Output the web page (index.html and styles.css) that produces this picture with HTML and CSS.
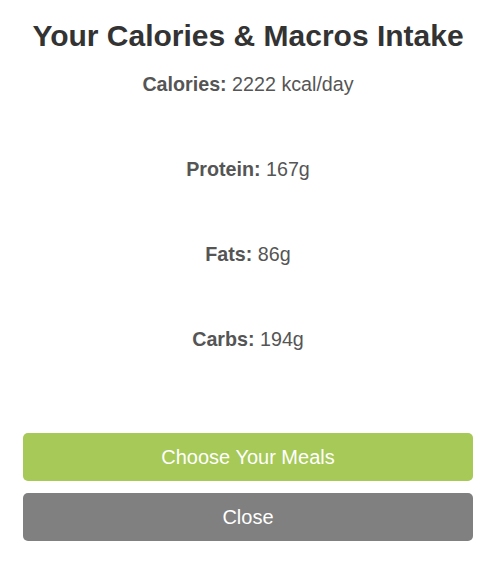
FILE: index.html
```html
<!DOCTYPE html>
<html>
<head>
<meta charset="utf-8">
<link rel="stylesheet" href="styles.css">
</head>
<body>
<div class="modal">
  <h2 class="title">Your Calories &amp; Macros Intake</h2>
  <div class="stats">
    <p class="stat"><strong>Calories:</strong> 2222 kcal/day</p>
    <p class="stat"><strong>Protein:</strong> 167g</p>
    <p class="stat"><strong>Fats:</strong> 86g</p>
    <p class="stat"><strong>Carbs:</strong> 194g</p>
  </div>
  <div class="actions">
    <button class="btn btn-green">Choose Your Meals</button>
    <button class="btn btn-gray">Close</button>
  </div>
</div>
</body>
</html>
```
FILE: styles.css
```css
html, body {
  margin: 0;
  padding: 0;
  background: #fff;
}
body {
  font-family: "Liberation Sans", Arial, sans-serif;
}
.modal {
  padding: 18px 20px 0 23px;
  display: flex;
  flex-direction: column;
  align-items: center;
}
.title {
  margin: 0;
  font-size: 30px;
  line-height: 36px;
  font-weight: bold;
  color: #333;
  text-align: center;
}
.stats {
  margin-top: 19px;
  display: flex;
  flex-direction: column;
  gap: 63px;
  align-items: center;
}
.stat {
  margin: 0;
  font-size: 19.7px;
  line-height: 22px;
  color: #555;
}
.stat strong {
  font-weight: bold;
}
.actions {
  margin-top: 83px;
  width: 450px;
  align-self: flex-start;
  display: flex;
  flex-direction: column;
  gap: 12px;
}
.btn {
  height: 48px;
  border: none;
  border-radius: 5px;
  color: #fff;
  font-family: "Liberation Sans", Arial, sans-serif;
  font-size: 20px;
  width: 100%;
}
.btn-green {
  background: #a6c957;
}
.btn-gray {
  background: #808080;
}
```
